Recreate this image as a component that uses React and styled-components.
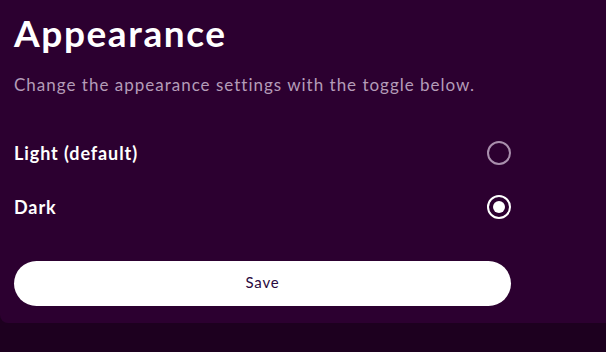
import React, { useState } from 'react';
import styled, { createGlobalStyle } from 'styled-components';

const GlobalStyle = createGlobalStyle`
    html, body {
        margin: 0;
        padding: 0;
        background: #1d001f;
    }
    body {
        font-family: 'Lato', 'Noto Sans', sans-serif;
    }
`;

const Panel = styled.div`
    background: #2c0030;
    padding: 12px 14px 17px;
    border-bottom-left-radius: 8px;
`;

const Content = styled.div`
    width: 497px;
`;

const Title = styled.h1`
    margin: 0;
    font-size: 37px;
    line-height: 42px;
    font-weight: 700;
    letter-spacing: 1.6px;
    color: #ffffff;
`;

const Subtitle = styled.p`
    margin: 19px 0 29px;
    font-size: 17px;
    line-height: 24px;
    letter-spacing: 1px;
    color: #b49cb8;
`;

const Option = styled.label`
    display: flex;
    align-items: center;
    justify-content: space-between;
    height: 54px;
    cursor: pointer;
`;

const OptionLabel = styled.span`
    font-size: 18px;
    font-weight: 700;
    letter-spacing: 0.9px;
    color: #ffffff;
`;

const Radio = styled.span`
    box-sizing: border-box;
    width: 24px;
    height: 24px;
    border-radius: 50%;
    border: 2px solid ${(p) => (p.checked ? '#ffffff' : '#a98fad')};
    display: flex;
    align-items: center;
    justify-content: center;

    &::after {
        content: '';
        width: 12px;
        height: 12px;
        border-radius: 50%;
        background: #ffffff;
        display: ${(p) => (p.checked ? 'block' : 'none')};
    }
`;

const SaveButton = styled.button`
    display: block;
    width: 100%;
    height: 45px;
    margin-top: 27px;
    padding: 0 0 3px;
    border: none;
    border-radius: 23px;
    background: #ffffff;
    color: #2a0a40;
    font-family: 'Lato', 'Noto Sans', sans-serif;
    font-size: 15px;
    letter-spacing: 0.8px;
    cursor: pointer;
`;

const options = [
    { id: 'light', label: 'Light (default)' },
    { id: 'dark', label: 'Dark' },
];

const App = () => {
    const [theme, setTheme] = useState('dark');

    return (
        <>
            <GlobalStyle />
            <Panel>
                <Content>
                    <Title>Appearance</Title>
                    <Subtitle>Change the appearance settings with the toggle below.</Subtitle>
                    {options.map((opt) => (
                        <Option key={opt.id} onClick={() => setTheme(opt.id)}>
                            <OptionLabel>{opt.label}</OptionLabel>
                            <Radio checked={theme === opt.id} />
                        </Option>
                    ))}
                    <SaveButton>Save</SaveButton>
                </Content>
            </Panel>
        </>
    );
};

export default App;
